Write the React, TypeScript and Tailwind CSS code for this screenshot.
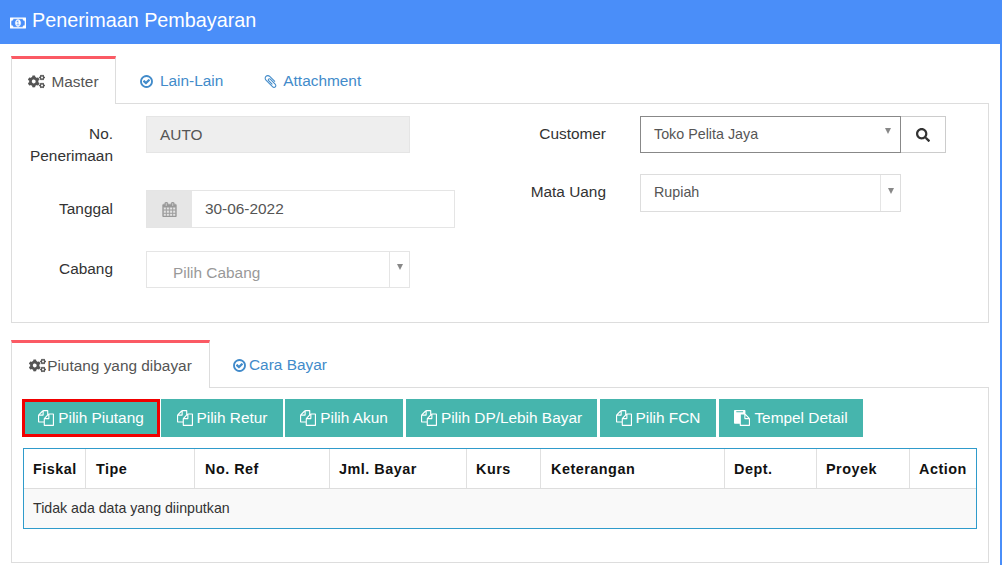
import { FaCogs, FaSearch } from "react-icons/fa";

// Font Awesome 4 glyphs, the v5 set in react-icons draws these differently
const paths = {
  copy: "M1696 384q40 0 68 28t28 68v1216q0 40-28 68t-68 28h-960q-40 0-68-28t-28-68v-288h-544q-40 0-68-28t-28-68v-672q0-40 20-88t48-76l408-408q28-28 76-48t88-20h416q40 0 68 28t28 68v328q68-40 128-40h416zm-544 213l-299 299h299v-299zm-640-384l-299 299h299v-299zm196 647l316-316v-416h-384v416q0 40-28 68t-68 28h-416v640h512v-256q0-40 20-88t48-76zm956 804v-1152h-384v416q0 40-28 68t-68 28h-416v640h896z",
  paste: "M768 1664h896v-640h-416q-40 0-68-28t-28-68v-416h-384v1152zm256-1440v-64q0-13-9.5-22.5t-22.5-9.5h-704q-13 0-22.5 9.5t-9.5 22.5v64q0 13 9.5 22.5t22.5 9.5h704q13 0 22.5-9.5t9.5-22.5zm256 672h299l-299-299v299zm512 128v672q0 40-28 68t-68 28h-960q-40 0-68-28t-28-68v-160h-544q-40 0-68-28t-28-68v-1344q0-40 28-68t68-28h1088q40 0 68 28t28 68v328q21 13 36 28l408 408q28 28 48 76t20 88z",
  check: "M1299 813l-422 422q-19 19-45 19t-45-19l-294-294q-19-19-19-45t19-45l102-102q19-19 45-19t45 19l147 147 275-275q19-19 45-19t45 19l102 102q19 19 19 45t-19 45zm141 83q0-148-73-273t-198-198-273-73-273 73-198 198-73 273 73 273 198 198 273 73 273-73 198-198 73-273zm224 0q0 209-103 385.5t-279.5 279.5-385.5 103-385.5-103-279.5-279.5-103-385.5 103-385.5 279.5-279.5 385.5-103 385.5 103 279.5 279.5 103 385.5z",
  clip: "M1596 1385q0 117-79 196t-196 79q-135 0-235-100l-777-776q-113-115-113-271 0-159 110-270t269-111q158 0 273 113l605 606q10 10 10 22 0 16-30.5 46.5t-46.5 30.5q-13 0-23-10l-606-607q-79-77-181-77-106 0-179 75t-73 181q0 105 76 181l776 777q63 63 145 63 64 0 106-42t42-106q0-82-63-145l-581-581q-26-24-60-24-29 0-48 19t-19 48q0 32 25 59l410 410q10 10 10 22 0 16-31 47t-47 31q-12 0-22-10l-410-410q-63-61-63-149 0-82 57-139t139-57q88 0 149 63l581 581q100 98 100 235z",
  calendar: "M192 1664h288v-288h-288v288zm352 0h320v-288h-320v288zm-352-352h288v-320h-288v320zm352 0h320v-320h-320v320zm-352-384h288v-288h-288v288zm736 736h320v-288h-320v288zm-384-736h320v-288h-320v288zm768 736h288v-288h-288v288zm-384-352h320v-320h-320v320zm-352-864v-288q0-13-9.5-22.5t-22.5-9.5h-64q-13 0-22.5 9.5t-9.5 22.5v288q0 13 9.5 22.5t22.5 9.5h64q13 0 22.5-9.5t9.5-22.5zm736 864h288v-320h-288v320zm-384-384h320v-288h-320v288zm384 0h288v-288h-288v288zm32-480v-288q0-13-9.5-22.5t-22.5-9.5h-64q-13 0-22.5 9.5t-9.5 22.5v288q0 13 9.5 22.5t22.5 9.5h64q13 0 22.5-9.5t9.5-22.5zm384-64v1280q0 52-38 90t-90 38h-1408q-52 0-90-38t-38-90v-1280q0-52 38-90t90-38h128v-96q0-66 47-113t113-47h64q66 0 113 47t47 113v96h384v-96q0-66 47-113t113-47h64q66 0 113 47t47 113v96h128q52 0 90 38t38 90z",
  money: "M768 1152h384v-96h-128v-448h-114l-148 137 77 80q42-37 55-57h2v288h-128v96zm512-256q0 70-21 142t-59.5 134-101.5 101-138 39-138-39-101.5-101-59.5-134-21-142 21-142 59.5-134 101.5-101 138-39 138 39 101.5 101 59.5 134 21 142zm512 256v-512q-106 0-181-75t-75-181h-1152q0 106-75 181t-181 75v512q106 0 181 75t75 181h1152q0-106 75-181t181-75zm128-832v1152q0 26-19 45t-45 19h-1792q-26 0-45-19t-19-45v-1152q0-26 19-45t45-19h1792q26 0 45 19t19 45z",
};

const Fa4 = ({ name, className, box = "0 0 1792 1792" }: { name: keyof typeof paths; className: string; box?: string }) => (
  <svg viewBox={box} className={className} fill="currentColor" stroke="currentColor" strokeWidth={name === "money" || name === "calendar" ? 50 : 0}>
    <path d={paths[name]} />
  </svg>
);

const Caret = () => (
  <span className="w-0 h-0 border-x-[3.5px] border-x-transparent border-t-[6px] border-t-[#888]" />
);

const ActionButton = ({ label, className, paste }: { label: string; className: string; paste?: boolean }) => (
  <button className={`h-[38px] bg-[#46b5ad] text-white text-[15.4px] flex items-center justify-center gap-[4px] ${className}`}>
    <Fa4 name={paste ? "paste" : "copy"} className="w-[16px] h-[16px]" />
    {label}
  </button>
);

const columns = [
  { label: "Fiskal", width: "w-[62px] pl-[9px]" },
  { label: "Tipe", width: "w-[109px] pl-[10px]" },
  { label: "No. Ref", width: "w-[135px] pl-[10px]" },
  { label: "Jml. Bayar", width: "w-[137px] pl-[9px]" },
  { label: "Kurs", width: "w-[74px] pl-[9px]" },
  { label: "Keterangan", width: "w-[184px] pl-[10px]" },
  { label: "Dept.", width: "w-[92px] pl-[9px]" },
  { label: "Proyek", width: "w-[93px] pl-[9px]" },
  { label: "Action", width: "flex-1 pl-[9px]" },
];

export default function App() {
  return (
    <div className="w-[1002px] h-[565px] overflow-hidden bg-white font-['Liberation_Sans',Arial,sans-serif] text-[#333] border-r-2 border-r-[#4a8ef9]">
      <div className="h-[44px] bg-[#4a8ef9] text-white flex items-center pl-[10px] pb-[3px] gap-[6px] text-[19.8px]">
        <Fa4 name="money" box="0 0 1920 1792" className="w-[16px] h-[16px] mt-[4px]" />
        <span>Penerimaan Pembayaran</span>
      </div>

      <div className="px-[11px] pt-[12px] w-[1000px]">
        <div className="flex h-[47px] text-[15.4px]">
          <div className="w-[105px] border-t-[3px] border-t-[#fb5a64] border-x border-x-[#ddd] bg-white flex items-center justify-center gap-[6px] text-[#555] relative z-10 h-[48px]">
            <FaCogs className="text-[17px]" /> Master
          </div>
          <div className="flex items-center gap-[6px] text-[#428bca] pl-[23px] pt-[3px]">
            <Fa4 name="check" className="w-[15px] h-[15px]" /> Lain-Lain
          </div>
          <div className="flex items-center gap-[5px] text-[#428bca] pl-[40px] pt-[3px]">
            <Fa4 name="clip" className="w-[15px] h-[15px]" /> Attachment
          </div>
        </div>

        <div className="h-[220px] border border-[#ddd] flex text-[15.4px]">
          <div className="w-[398px] shrink-0 pt-[12px]">
            <div className="flex">
              <div className="w-[101px] shrink-0 text-right leading-[22px] pt-[7px]">No. Penerimaan</div>
              <div className="ml-[33px] w-[264px] h-[37px] shrink-0 bg-[#eee] border border-[#e5e5e5] pl-[13px] flex items-center text-[#555]">
                AUTO
              </div>
            </div>
            <div className="flex mt-[23px]">
              <div className="w-[101px] shrink-0 text-right leading-[38px]">Tanggal</div>
              <div className="ml-[33px] w-[309px] h-[38px] shrink-0 border border-[#e5e5e5] flex items-center text-[#555]">
                <div className="w-[45px] h-full bg-[#e6e6e6] flex items-center justify-center text-[#999]">
                  <Fa4 name="calendar" className="w-[15px] h-[15px]" />
                </div>
                <span className="pl-[13px]">30-06-2022</span>
              </div>
            </div>
            <div className="flex mt-[23px]">
              <div className="w-[101px] shrink-0 text-right leading-[36px]">Cabang</div>
              <div className="ml-[33px] w-[264px] h-[37px] shrink-0 border border-[#e5e5e5] flex">
                <div className="flex-1 pl-[26px] pt-[11px] leading-[20px] text-[#999]">Pilih Cabang</div>
                <div className="w-[20px] border-l border-l-[#e5e5e5] flex justify-center pt-[12px]">
                  <Caret />
                </div>
              </div>
            </div>
          </div>

          <div className="flex-1 pt-[12px]">
            <div className="flex">
              <div className="w-[196px] shrink-0 text-right leading-[36px]">Customer</div>
              <div className="ml-[34px] w-[261px] h-[37px] shrink-0 border border-[#888] flex items-center justify-between pl-[13px] pr-[9px] text-[14.3px] text-[#555]">
                Toko Pelita Jaya
                <span className="mb-[7px] flex"><Caret /></span>
              </div>
              <div className="w-[45px] h-[37px] shrink-0 border border-[#ccc] border-l-0 flex items-center justify-center text-[#333]">
                <FaSearch className="text-[14px]" />
              </div>
            </div>
            <div className="flex mt-[21px]">
              <div className="w-[196px] shrink-0 text-right leading-[36px]">Mata Uang</div>
              <div className="ml-[34px] w-[261px] h-[38px] shrink-0 border border-[#ddd] flex text-[14.3px] text-[#555]">
                <div className="flex-1 pl-[13px] flex items-center">Rupiah</div>
                <div className="w-[20px] border-l border-l-[#e5e5e5] flex justify-center pt-[13px]">
                  <Caret />
                </div>
              </div>
            </div>
          </div>
        </div>

        <div className="flex h-[47px] mt-[17px] text-[15.4px]">
          <div className="w-[199px] border-t-[3px] border-t-[#fb5a64] border-x border-x-[#ddd] bg-white flex items-center justify-center gap-[1px] text-[#555] relative z-10 h-[48px]">
            <FaCogs className="text-[17px]" /> Piutang yang dibayar
          </div>
          <div className="flex items-center gap-[2px] text-[#428bca] pl-[22px] pt-[3px]">
            <Fa4 name="check" className="w-[15px] h-[15px]" /> Cara Bayar
          </div>
        </div>

        <div className="h-[176px] border border-[#ddd] px-[11px] pt-[11px]">
          <div className="flex">
            <ActionButton label="Pilih Piutang" className="w-[138px] -ml-[1px] border-[3px] border-[#f00000]" />
            <ActionButton label="Pilih Retur" className="w-[122px] ml-[1px]" />
            <ActionButton label="Pilih Akun" className="w-[118px] ml-[2px]" />
            <ActionButton label="Pilih DP/Lebih Bayar" className="w-[191px] ml-[3px]" />
            <ActionButton label="Pilih FCN" className="w-[116px] ml-[3px]" />
            <ActionButton label="Tempel Detail" className="w-[144px] ml-[3px]" paste />
          </div>

          <div className="mt-[11px] w-[954px] border border-[#2f9bcb] text-[#111]">
            <div className="flex h-[40px] border-b border-b-[#ddd] font-bold text-[14.4px] tracking-[0.5px] pt-[2px]">
              {columns.map((col, i) => (
                <div
                  key={col.label}
                  className={`${col.width} flex items-center -mt-[2px] pt-[2px] ${i < columns.length - 1 ? "border-r border-r-[#e0e0e0]" : ""}`}
                >
                  {col.label}
                </div>
              ))}
            </div>
            <div className="h-[39px] bg-[#f9f9f9] flex items-center pl-[9px] text-[14.2px] text-[#333]">
              Tidak ada data yang diinputkan
            </div>
          </div>
        </div>
      </div>
    </div>
  );
}
